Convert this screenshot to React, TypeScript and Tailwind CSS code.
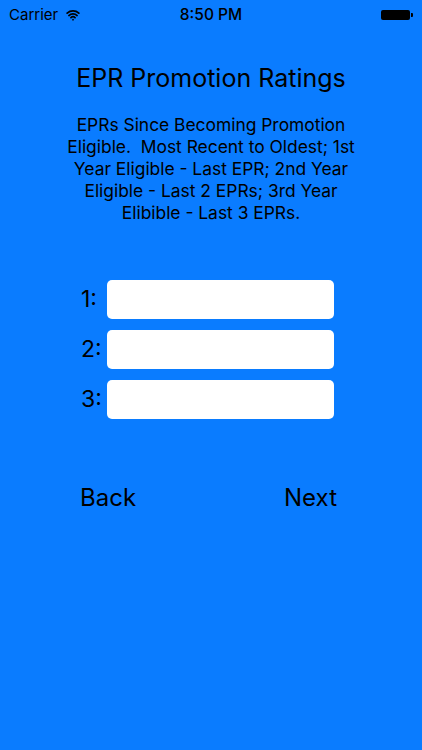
import { Wifi } from "lucide-react";

const font = { fontFamily: "Inter, 'Noto Sans', sans-serif" };

function StatusBar() {
  return (
    <div className="relative flex h-[30px] items-center justify-between px-[9px] text-[15px] text-black">
      <div className="flex items-center gap-[8px]">
        <span>Carrier</span>
        <Wifi className="h-[14px] w-[14px]" strokeWidth={3} />
      </div>
      <span className="absolute left-1/2 -translate-x-1/2 text-[15.5px] font-medium">8:50 PM</span>
      <div className="flex items-center gap-[1px]">
        <div className="h-[10px] w-[29px] rounded-[2px] bg-black" />
        <div className="h-[4px] w-[2px] rounded-r-[1px] bg-black" />
      </div>
    </div>
  );
}

function RatingRow({ n }: { n: number }) {
  return (
    <div className="flex items-center">
      <span className="w-[26px] text-[23px] text-black">{n}:</span>
      <input className="h-[39px] w-[227px] rounded-[5px] bg-white outline-none" />
    </div>
  );
}

export default function App() {
  return (
    <div className="h-[750px] w-[422px] bg-[#0a7cff]" style={font}>
      <StatusBar />
      <div className="flex flex-col items-center">
        <h1 className="mt-[33px] text-[25px] leading-[30px] text-black">EPR Promotion Ratings</h1>
        <p className="mt-[21px] whitespace-nowrap text-center text-[17.4px] leading-[22px] text-black">
          EPRs Since Becoming Promotion
          <br />
          Eligible.&nbsp; Most Recent to Oldest; 1st
          <br />
          Year Eligible - Last EPR; 2nd Year
          <br />
          Eligible - Last 2 EPRs; 3rd Year
          <br />
          Elibible - Last 3 EPRs.
        </p>
        <div className="mt-[56px] ml-[-7px] flex flex-col gap-[11px]">
          <RatingRow n={1} />
          <RatingRow n={2} />
          <RatingRow n={3} />
        </div>
        <div className="mt-[61px] ml-[-5px] flex w-[257px] justify-between text-[24px] text-black">
          <span>Back</span>
          <span>Next</span>
        </div>
      </div>
    </div>
  );
}
